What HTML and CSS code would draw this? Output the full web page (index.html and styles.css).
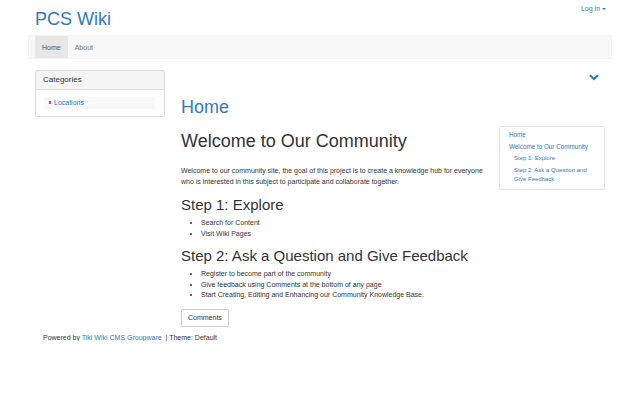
FILE: index.html
```html
<!DOCTYPE html>
<html lang="en">
<head>
    <meta charset="UTF-8">
    <title>PCS Wiki</title>
    <link rel="stylesheet" href="styles.css">
</head>
<body>
    <div class="page">
        <header class="site-header">
            <a class="brand" href="#">PCS Wiki</a>
            <a class="login" href="#">Log in <span class="caret"></span></a>
        </header>

        <nav class="navbar">
            <a class="nav-item active" href="#">Home</a>
            <a class="nav-item" href="#">About</a>
        </nav>

        <div class="row">
            <aside class="side-col">
                <div class="panel">
                    <div class="panel-heading">Categories</div>
                    <div class="panel-body">
                        <div class="cat-item"><span class="cat-dot"></span><a href="#">Locations</a></div>
                    </div>
                </div>
            </aside>

            <main class="main-col">
                <div class="page-actions">
                    <svg width="10" height="7" viewBox="0 0 10 7"><path d="M1 1.2 L5 5 L9 1.2" fill="none" stroke="#337ab7" stroke-width="2.2"/></svg>
                </div>
                <h1 class="page-title">Home</h1>

                <div class="content">
                    <div class="toc">
                        <a class="toc-l1" href="#">Home</a>
                        <a class="toc-l1" href="#">Welcome to Our Community</a>
                        <a class="toc-l2" href="#">Step 1: Explore</a>
                        <a class="toc-l2" href="#">Step 2: Ask a Question and Give Feedback</a>
                    </div>

                    <h1 class="wiki-h1">Welcome to Our Community</h1>
                    <p>Welcome to our community site, the goal of this project is to create a knowledge hub for everyone who is interested in this subject to participate and collaborate together.</p>

                    <h2>Step 1: Explore</h2>
                    <ul>
                        <li>Search for Content</li>
                        <li>Visit Wiki Pages</li>
                    </ul>

                    <h2>Step 2: Ask a Question and Give Feedback</h2>
                    <ul class="last-list">
                        <li>Register to become part of the community</li>
                        <li>Give feedback using Comments at the bottom of any page</li>
                        <li>Start Creating, Editing and Enhancing our Community Knowledge Base.</li>
                    </ul>

                    <button class="btn">Comments</button>
                </div>
            </main>
        </div>

        <footer class="footer">
            Powered by <a href="#">Tiki Wiki CMS Groupware</a> &nbsp;| Theme: Default
        </footer>
    </div>
</body>
</html>
```

FILE: styles.css
```css
body {
    margin: 0;
    font-family: "Liberation Sans", Arial, sans-serif;
    font-size: 7px;
    color: #333;
    background: #fff;
}

a {
    color: #337ab7;
    text-decoration: none;
}

.page {
    width: 584px;
    margin: 0 0 0 28px;
}

.site-header {
    display: flex;
    justify-content: space-between;
    align-items: flex-start;
    padding: 0 6px 0 7px;
    height: 35px;
}

.brand {
    font-size: 18px;
    line-height: 20px;
    margin-top: 9px;
}

.login {
    font-size: 7px;
    margin-top: 5px;
}

.caret {
    display: inline-block;
    width: 0;
    height: 0;
    border-top: 2px solid #337ab7;
    border-left: 2px solid transparent;
    border-right: 2px solid transparent;
    vertical-align: middle;
}

.navbar {
    display: flex;
    background: #f8f8f8;
    border: 1px solid #f3f3f3;
    height: 22px;
    padding-left: 6px;
}

.nav-item {
    display: flex;
    align-items: center;
    padding: 0 7px;
    color: #777;
    font-size: 7px;
}

.nav-item.active {
    background: #e7e7e7;
    color: #555;
}

.row {
    display: flex;
    gap: 16px;
    padding: 11px 7px 0 7px;
}

.side-col {
    width: 130px;
    flex-shrink: 0;
}

.panel {
    border: 1px solid #ddd;
    border-radius: 2px;
}

.panel-heading {
    background: #f5f5f5;
    border-bottom: 1px solid #ddd;
    padding: 0 7px;
    height: 18px;
    line-height: 18px;
    font-size: 8px;
    color: #333;
}

.panel-body {
    padding: 7px 9px 7px 8px;
}

.cat-item {
    background: #f9f9f9;
    height: 12px;
    line-height: 12px;
    padding-left: 5px;
    font-size: 7px;
}

.cat-dot {
    display: inline-block;
    width: 2px;
    height: 3px;
    background: #e0368a;
    margin-right: 3px;
    vertical-align: middle;
    position: relative;
    top: -1px;
}

.main-col {
    flex: 1;
}

.page-actions {
    display: flex;
    justify-content: flex-end;
    padding: 4px 6px 0 0;
    height: 12px;
}

.page-title {
    font-size: 18px;
    font-weight: normal;
    color: #337ab7;
    margin: 10px 0 0 0;
    line-height: 22px;
}

.content {
    padding-top: 8px;
}

.toc {
    float: right;
    width: 87px;
    margin: 0 0 8px 14px;
    border: 1px solid #e3e3e3;
    border-radius: 2px;
    padding: 2px 8px 2px 9px;
    font-size: 6.3px;
}

.toc a {
    display: block;
    line-height: 9px;
    margin: 1px 0 3px;
}

.toc .toc-l2 {
    padding-left: 5px;
    font-size: 6px;
}

.wiki-h1 {
    font-size: 18px;
    font-weight: normal;
    margin: 4px 0 14px;
    line-height: 22px;
}

p {
    margin: 0 0 9px;
    line-height: 10.5px;
}

h2 {
    font-size: 15px;
    font-weight: normal;
    margin: 0 0 4px;
    line-height: 18px;
}

ul {
    margin: 0 0 8px;
    padding-left: 20px;
    line-height: 10.5px;
}

ul.last-list {
    margin-bottom: 4px;
}

.btn {
    margin-top: 4px;
    font-family: "Liberation Sans", Arial, sans-serif;
    font-size: 7px;
    color: #333;
    background: #fff;
    border: 1px solid #ccc;
    border-radius: 2px;
    padding: 0 6px;
    height: 18px;
}

.footer {
    padding: 7px 0 0 15px;
    font-size: 7px;
    color: #333;
}
```
